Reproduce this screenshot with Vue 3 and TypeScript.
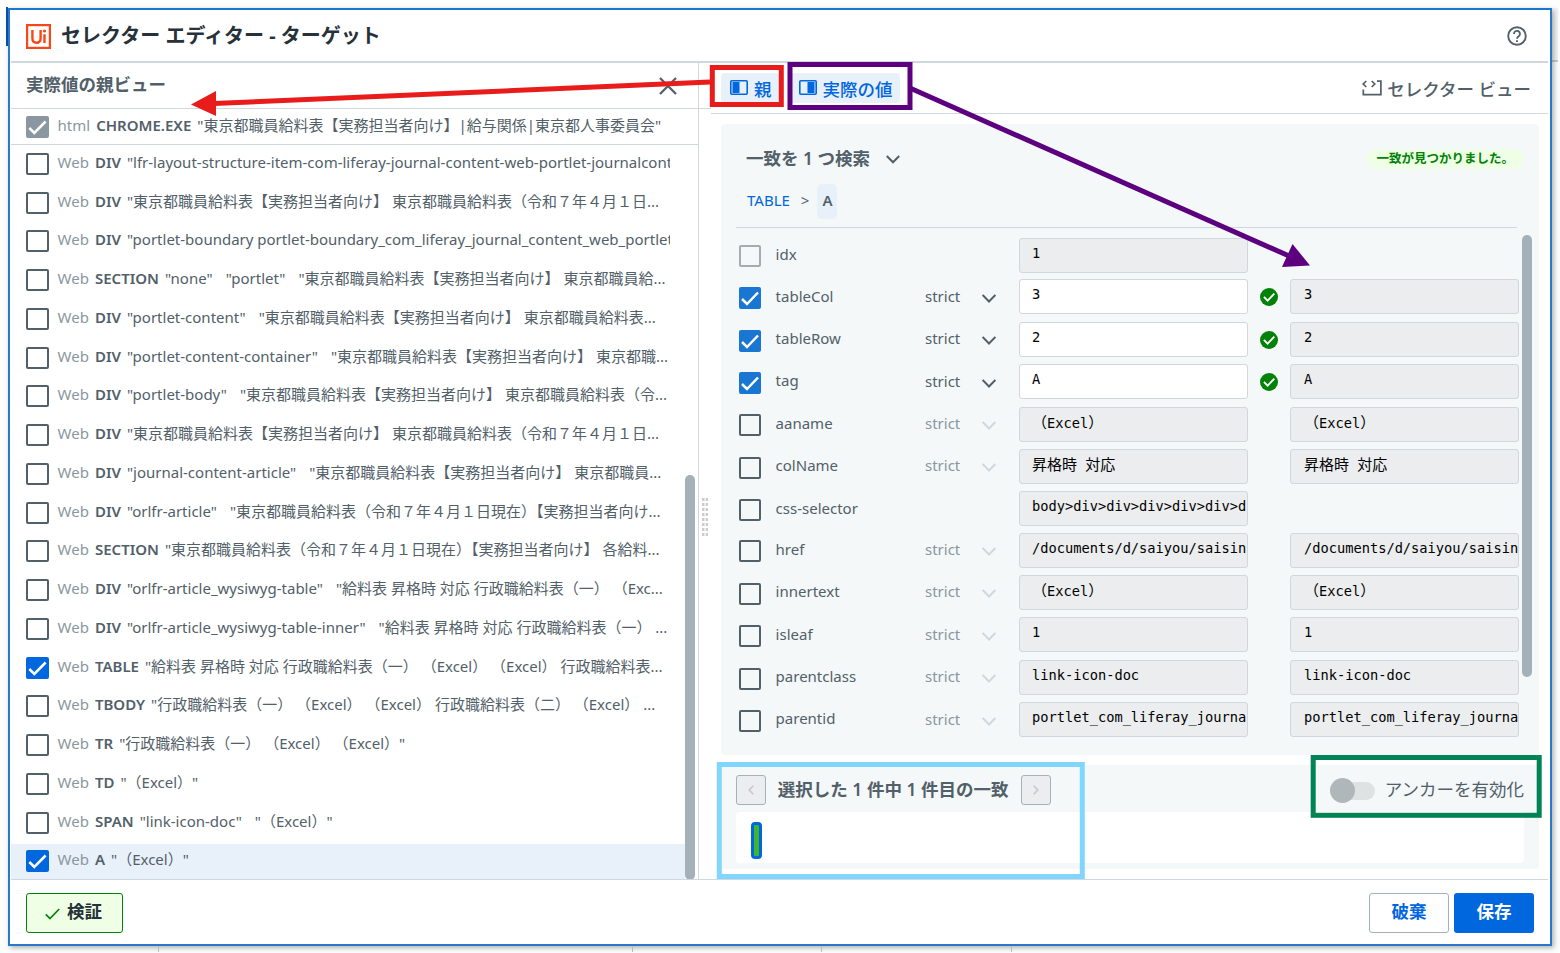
<script setup lang="ts">
interface TreeNode {
  kind: string
  tag: string
  values: string[]
  checked?: boolean
  active?: boolean
}

interface Attribute {
  name: string
  value: string
  actual?: string
  mode?: boolean
  state: 'on' | 'off' | 'locked'
}

const nodes: TreeNode[] = [
  { kind: 'Web', tag: 'DIV', values: ['"lfr-layout-structure-item-com-liferay-journal-content-web-portlet-journalcontent"'] },
  { kind: 'Web', tag: 'DIV', values: ['"東京都職員給料表【実務担当者向け】 東京都職員給料表（令和７年４月１日...'] },
  { kind: 'Web', tag: 'DIV', values: ['"portlet-boundary portlet-boundary_com_liferay_journal_content_web_portlet_"'] },
  { kind: 'Web', tag: 'SECTION', values: ['"none"', '"portlet"', '"東京都職員給料表【実務担当者向け】 東京都職員給...'] },
  { kind: 'Web', tag: 'DIV', values: ['"portlet-content"', '"東京都職員給料表【実務担当者向け】 東京都職員給料表...'] },
  { kind: 'Web', tag: 'DIV', values: ['"portlet-content-container"', '"東京都職員給料表【実務担当者向け】 東京都職...'] },
  { kind: 'Web', tag: 'DIV', values: ['"portlet-body"', '"東京都職員給料表【実務担当者向け】 東京都職員給料表（令...'] },
  { kind: 'Web', tag: 'DIV', values: ['"東京都職員給料表【実務担当者向け】 東京都職員給料表（令和７年４月１日...'] },
  { kind: 'Web', tag: 'DIV', values: ['"journal-content-article"', '"東京都職員給料表【実務担当者向け】 東京都職員...'] },
  { kind: 'Web', tag: 'DIV', values: ['"orlfr-article"', '"東京都職員給料表（令和７年４月１日現在）【実務担当者向け...'] },
  { kind: 'Web', tag: 'SECTION', values: ['"東京都職員給料表（令和７年４月１日現在）【実務担当者向け】 各給料...'] },
  { kind: 'Web', tag: 'DIV', values: ['"orlfr-article_wysiwyg-table"', '"給料表 昇格時 対応 行政職給料表（一） （Exc...'] },
  { kind: 'Web', tag: 'DIV', values: ['"orlfr-article_wysiwyg-table-inner"', '"給料表 昇格時 対応 行政職給料表（一） ...'] },
  { kind: 'Web', tag: 'TABLE', values: ['"給料表 昇格時 対応 行政職給料表（一） （Excel） （Excel） 行政職給料表...'], checked: true },
  { kind: 'Web', tag: 'TBODY', values: ['"行政職給料表（一） （Excel） （Excel） 行政職給料表（二） （Excel） ...'] },
  { kind: 'Web', tag: 'TR', values: ['"行政職給料表（一） （Excel） （Excel）"'] },
  { kind: 'Web', tag: 'TD', values: ['"（Excel）"'] },
  { kind: 'Web', tag: 'SPAN', values: ['"link-icon-doc"', '"（Excel）"'] },
  { kind: 'Web', tag: 'A', values: ['"（Excel）"'], checked: true, active: true },
]

const attributes: Attribute[] = [
  { name: 'idx', value: '1', state: 'locked' },
  { name: 'tableCol', value: '3', actual: '3', mode: true, state: 'on' },
  { name: 'tableRow', value: '2', actual: '2', mode: true, state: 'on' },
  { name: 'tag', value: 'A', actual: 'A', mode: true, state: 'on' },
  { name: 'aaname', value: '（Excel）', actual: '（Excel）', mode: true, state: 'off' },
  { name: 'colName', value: '昇格時 対応', actual: '昇格時 対応', mode: true, state: 'off' },
  { name: 'css-selector', value: 'body>div>div>div>div>div>div', state: 'off' },
  { name: 'href', value: '/documents/d/saiyou/saisinn', actual: '/documents/d/saiyou/saisinn', mode: true, state: 'off' },
  { name: 'innertext', value: '（Excel）', actual: '（Excel）', mode: true, state: 'off' },
  { name: 'isleaf', value: '1', actual: '1', mode: true, state: 'off' },
  { name: 'parentclass', value: 'link-icon-doc', actual: 'link-icon-doc', mode: true, state: 'off' },
  { name: 'parentid', value: 'portlet_com_liferay_journal', actual: 'portlet_com_liferay_journal', mode: true, state: 'off' },
]

// Splits a value into half-width and full-width runs, which are set at different sizes.
function runs(value: string): { text: string; wide: boolean }[] {
  return (value.match(/[\u0000-\u00ff]+|[^\u0000-\u00ff]+/g) ?? []).map((text) => ({
    text,
    wide: text.charCodeAt(0) > 0xff,
  }))
}
</script>

<template>
  <div class="stage">
    <i class="accent"></i>
    <i class="edge"></i>
    <i class="tick t1"></i><i class="tick t2"></i><i class="tick t3"></i><i class="tick t4"></i>

    <section class="dialog">
      <header class="titlebar">
        <svg class="logo" width="25" height="25" viewBox="0 0 25 25" fill="none" stroke="#fa4616">
          <rect x="1.1" y="1.1" width="22.8" height="22.8" stroke-width="2.2" />
          <path d="M6.4 6v8.2c0 3 1.500 4.500 4.100 4.500s4.100-1.500 4.100-4.500V6M18.500 10.200v8.900" stroke-width="2.4" />
          <circle cx="18.500" cy="7" r="1.600" fill="#fa4616" stroke="none" />
        </svg>
        <h1>セレクター エディター - ターゲット</h1>
        <svg class="help" width="20" height="20" viewBox="0 0 20 20" fill="none" stroke="#526069">
          <circle cx="10" cy="10" r="8.8" stroke-width="1.9" />
          <path d="M7 8a3 3 0 1 1 4.7 2.3C10.600 11.100 10 11.600 10 12.700" stroke-width="1.8" />
          <path d="M10 14.200v1.900" stroke-width="1.9" />
        </svg>
      </header>

      <div class="body">
        <aside class="parents">
          <div class="parents-head">
            <h2>実際値の親ビュー</h2>
            <svg width="18" height="18" viewBox="0 0 18 18" fill="none" stroke="#526069" stroke-width="2.300">
              <path d="M1 1l16 16M17 1L1 17" />
            </svg>
          </div>
          <div class="node root">
            <span class="box grey">
              <svg width="23" height="22" viewBox="0 0 23 22"><path d="M3.300 12l5 5L19.600 5.500" /></svg>
            </span>
            <span class="kind">html</span>
            <b>CHROME.EXE</b>
            <span class="val">"東京都職員給料表【実務担当者向け】|給与関係|東京都人事委員会"</span>
          </div>
          <div class="scroller">
            <div class="nodes">
              <div v-for="(n, i) in nodes" :key="i" class="node" :class="{ active: n.active }">
                <span class="box" :class="{ on: n.checked }">
                  <svg v-if="n.checked" width="23" height="22" viewBox="0 0 23 22"><path d="M3.300 12l5 5L19.600 5.500" /></svg>
                </span>
                <span class="kind">{{ n.kind }}</span>
                <b>{{ n.tag }}</b>
                <span v-for="(v, j) in n.values" :key="j" class="val">{{ v }}</span>
              </div>
            </div>
            <div class="thumb"></div>
          </div>
        </aside>

        <div class="splitter">
          <div class="cap"></div>
          <svg width="6" height="39" viewBox="0 0 6 39" fill="#ccc">
            <template v-for="k in 8" :key="k">
              <rect x="0" :y="(k - 1) * 5" width="2.500" height="3" />
              <rect x="3.700" :y="(k - 1) * 5" width="2.300" height="3" />
            </template>
          </svg>
        </div>

        <main class="detail">
          <nav class="toolbar">
            <button class="toggle">
              <svg width="18" height="15" viewBox="0 0 18 15">
                <rect x=".8" y=".8" width="16.400" height="13.400" rx="1" fill="none" stroke="#0067df" stroke-width="1.600" />
                <rect x="2.500" y="2" width="7" height="11" fill="#0067df" />
              </svg>
              <span>親</span>
            </button>
            <button class="toggle second">
              <svg width="18" height="15" viewBox="0 0 18 15">
                <rect x=".8" y=".8" width="16.400" height="13.400" rx="1" fill="none" stroke="#0067df" stroke-width="1.600" />
                <rect x="8.500" y="2" width="7" height="11" fill="#0067df" />
              </svg>
              <span>実際の値</span>
            </button>
            <div class="view">
              <svg width="20" height="16" viewBox="0 0 20 16" fill="none" stroke="#526069" stroke-width="1.700">
                <path d="M4.300 1L1.200 4l3.100 3M9.700 1l3.100 3-3.100 3M15 1.200h3.900v13.500H1.300V9.500" />
              </svg>
              <span>セレクター ビュー</span>
            </div>
          </nav>

          <section class="card attrs">
            <div class="match">
              <span class="match-title">一致を 1 つ検索</span>
              <svg width="14" height="9" viewBox="0 0 14 9" fill="none" stroke="#526069" stroke-width="2">
                <path d="M.8 1L7 7.300 13.200 1" />
              </svg>
              <span class="badge">一致が見つかりました。</span>
            </div>
            <div class="crumbs">
              <span class="link">TABLE</span>
              <span class="sep">&gt;</span>
              <span class="current">A</span>
            </div>
            <div class="table-wrap">
              <div class="table">
                <div v-for="a in attributes" :key="a.name" class="attr" :class="{ short: !a.mode }">
                  <span class="box small" :class="a.state">
                    <svg v-if="a.state === 'on'" width="22" height="22" viewBox="0 0 22 22"><path d="M3 12l5 5L19 5.500" /></svg>
                  </span>
                  <span class="name">{{ a.name }}</span>
                  <span class="mode" :class="{ dim: a.state !== 'on' }">
                    <template v-if="a.mode">
                      <span>strict</span>
                      <svg width="14" height="9" viewBox="0 0 14 9" fill="none" stroke="currentColor" stroke-width="2">
                        <path d="M.6 1L7 7.500 13.400 1" />
                      </svg>
                    </template>
                  </span>
                  <span class="field" :class="{ editable: a.state === 'on' }">
                    <span class="clip"><span v-for="(r, i) in runs(a.value)" :key="i" :class="{ wide: r.wide }">{{ r.text }}</span></span>
                  </span>
                  <span class="ok">
                    <svg v-if="a.state === 'on'" width="18" height="18" viewBox="0 0 18 18">
                      <circle cx="9" cy="9" r="9" fill="#038108" />
                      <path d="M3.900 8.900l3.700 3.700 6.700-7" fill="none" stroke="#fff" stroke-width="1.800" />
                    </svg>
                  </span>
                  <span v-if="a.actual" class="field actual">
                    <span class="clip"><span v-for="(r, i) in runs(a.actual)" :key="i" :class="{ wide: r.wide }">{{ r.text }}</span></span>
                  </span>
                </div>
              </div>
              <div class="thumb"></div>
            </div>
          </section>

          <section class="card results">
            <div class="pager">
              <button class="step">
                <svg width="6" height="10" viewBox="0 0 6 10"><path d="M5.300.8L1.200 5l4.100 4.200" /></svg>
              </button>
              <span class="pager-text">選択した 1 件中 1 件目の一致</span>
              <button class="step">
                <svg width="6" height="10" viewBox="0 0 6 10"><path d="M.7.800L4.800 5 .7 9.200" /></svg>
              </button>
              <span class="switch"><i></i></span>
              <span class="anchor">アンカーを有効化</span>
            </div>
            <div class="strip"><i></i></div>
          </section>
        </main>
      </div>

      <footer class="actions">
        <button class="verify">
          <svg width="15" height="12" viewBox="0 0 15 12" fill="none" stroke="#038108" stroke-width="1.700">
            <path d="M.8 6.300l4.200 4.200L14.200 1" />
          </svg>
          <span>検証</span>
        </button>
        <button class="discard">破棄</button>
        <button class="save">保存</button>
      </footer>
    </section>

    <svg class="callouts" width="1560" height="953" viewBox="0 0 1560 953" fill="none">
      <path d="M710 82L214 103.500" stroke="#e91c1c" stroke-width="5" />
      <path d="M191 104.500L216 91v25z" fill="#e91c1c" />
      <rect x="712.300" y="67.500" width="69" height="37" stroke="#e91c1c" stroke-width="5" />
      <path d="M911 88.500L1288 255.500" stroke="#5c0080" stroke-width="5" />
      <path d="M1310 265.500L1292.500 244 1282 267z" fill="#5c0080" />
      <rect x="790" y="64.500" width="120" height="43" stroke="#5c0080" stroke-width="5" />
      <rect x="719.300" y="764.500" width="363" height="112" stroke="#80d6ff" stroke-width="5" />
      <rect x="1313.200" y="757.500" width="226" height="57.800" stroke="#008456" stroke-width="5" />
    </svg>
  </div>
</template>

<style>
body {
  margin: 0;
  overflow: hidden;
}
</style>

<style scoped>
* {
  box-sizing: border-box;
}
.stage {
  position: relative;
  width: 1560px;
  height: 953px;
  padding: 8px 0 0 8px;
  overflow: hidden;
  background: #fcfdfd;
  color: #526069;
  font: 15px/20px 'Noto Sans', 'Noto Sans CJK JP', sans-serif;
}
.accent {
  position: absolute;
  left: 6px;
  top: 7px;
  width: 2px;
  height: 39px;
  background: #0b4fb5;
}
.edge {
  position: absolute;
  left: 1552px;
  top: 8px;
  width: 6px;
  height: 54px;
  background: #f3f3f3;
  border-bottom: 2px solid #ccc;
}
.tick {
  position: absolute;
  top: 946px;
  width: 1px;
  height: 6px;
  background: #bbb;
  z-index: 1;
}
.t1 { left: 158px; }
.t2 { left: 632px; }
.t3 { left: 821px; }
.t4 { left: 1011px; }
.dialog {
  position: relative;
  display: flex;
  flex-direction: column;
  width: 1544px;
  height: 938px;
  padding: 0 2px 0 1px;
  border: 2px solid #2a79c9;
  border-top-color: #1976d2;
  background: #fff;
  box-shadow: 2px 2px 5px rgba(0, 0, 0, 0.3);
}
h1, h2 {
  margin: 0;
}
button {
  font: inherit;
  padding: 0;
  border: 0;
  color: inherit;
}
svg {
  flex: none;
  display: block;
}
.titlebar {
  display: flex;
  flex: none;
  align-items: center;
  height: 53px;
  padding: 0 21px 0 15px;
  border-bottom: 2px solid #cfd8dd;
}
.logo {
  margin-top: 2px;
}
.titlebar h1 {
  margin-left: 10px;
  font-size: 20px;
  line-height: 28px;
  font-weight: 700;
  color: #273139;
}
.help {
  margin-left: auto;
}
.body {
  display: flex;
  height: 816px;
  flex: none;
}
.parents {
  display: flex;
  flex-direction: column;
  width: 688px;
  border-right: 1px solid #cfd8dd;
}
.parents-head {
  display: flex;
  flex: none;
  align-items: center;
  justify-content: space-between;
  height: 46px;
  padding: 0 21px 0 15px;
  border-bottom: 1px solid #cfd8dd;
}
.parents-head h2 {
  margin-bottom: 3px;
  font-size: 17.5px;
  line-height: 24px;
}
.node {
  display: flex;
  flex: none;
  align-items: center;
  height: 35px;
  padding-left: 15px;
  margin-bottom: 3.75px;
  white-space: nowrap;
  overflow: hidden;
}
.node.active {
  background: #e8f0fa;
}
.node.root {
  height: 36px;
  margin: 0;
  border-bottom: 1px solid #cfd8dd;
}
.box {
  flex: none;
  width: 23px;
  height: 22px;
  border: 2px solid #526069;
  border-radius: 2px;
}
.box svg {
  margin: -2px;
}
.box path {
  fill: none;
  stroke: #fff;
  stroke-width: 2.5;
}
.box.on {
  border-color: #0067df;
  background: #0067df;
}
.box.grey {
  border-color: #8a97a0;
  background: #8a97a0;
}
.box.small {
  width: 22px;
}
.box.small.on {
  border-color: #1976d2;
  background: #1976d2;
}
.box.locked {
  border-color: #a4abb1;
}
.kind {
  margin: -4px 6px 0 8.6px;
  color: #8a97a0;
}
.node b {
  margin: -4px 6px 0 0;
  font-weight: 600;
}
.val {
  margin: -4px 13px 0 0;
}
.scroller {
  display: flex;
  flex: 1;
  min-height: 0;
  overflow: hidden;
}
.nodes {
  width: 674px;
  padding-top: 1.3px;
}
.node:not(.root) {
  border-right: 15px solid transparent;
}
.thumb {
  flex: none;
  width: 10px;
  border-radius: 5px;
  background: #a4b1b8;
}
.scroller .thumb {
  height: 405px;
  margin-top: 330px;
}
.splitter {
  width: 12px;
}
.cap {
  height: 46px;
  border-bottom: 1px solid #cfd8dd;
}
.splitter svg {
  margin: 389px 0 0 3px;
}
.detail {
  width: 837px;
}
.toolbar {
  display: flex;
  height: 51px;
  padding: 10px 16px 0 10px;
  border-bottom: 1px solid #cfd8dd;
  font-size: 17.5px;
}
.toggle {
  display: flex;
  align-items: center;
  height: 30px;
  gap: 6px;
  padding: 0 7px 0 9px;
  border-radius: 4px;
  background: #e8f0fa;
  color: #0067df;
  font-weight: 500;
}
.toggle span, .view span {
  margin-top: 1px;
}
.toggle svg {
  margin-top: -1px;
}
.toggle.second {
  margin-left: 11px;
}
.view {
  display: flex;
  align-items: center;
  gap: 5px;
  height: 30px;
  margin-left: auto;
  margin-right: 1px;
  font-weight: 500;
}
.card {
  margin: 10px 9px 0 10px;
  border-radius: 4px;
  background: #f4f8f9;
}
.attrs {
  height: 631px;
  padding: 17px 7px 0 15px;
}
.match {
  display: flex;
  align-items: center;
  height: 36px;
  padding: 0 8px 0 10px;
  font-weight: 600;
}
.match-title {
  margin: -2px 16px 0 0;
  font-size: 17.5px;
}
.badge {
  margin-left: auto;
  height: 20px;
  padding: 0 10px;
  border-radius: 10px;
  background: #eeffe5;
  color: #038108;
  font-size: 12.5px;
  font-weight: 700;
  line-height: 20px;
}
.crumbs {
  display: flex;
  align-items: center;
  width: 781px;
  height: 51px;
  padding: 0 0 2px 11px;
  border-bottom: 1px solid #cfd8dd;
}
.link {
  margin-top: -2px;
  color: #0067df;
}
.sep {
  margin: -2px 8px 0 11px;
}
.current {
  width: 20px;
  height: 35px;
  border-radius: 5px;
  background: #e8f0fa;
  font-weight: 600;
  line-height: 32px;
  text-align: center;
}
.table-wrap {
  display: flex;
  height: 520px;
}
.table {
  width: 786px;
  padding-top: 10.3px;
}
.table-wrap .thumb {
  height: 442px;
  margin-top: 7px;
}
.attr {
  display: flex;
  height: 42.4px;
  padding-left: 3px;
}
.attr.short {
  height: 41.2px;
}
.attr .box {
  margin-top: 7.8px;
}
.attr .box.locked {
  margin-top: 7px;
}
.name {
  width: 149.4px;
  margin: 6.2px 0 0 14.6px;
}
.mode {
  display: flex;
  gap: 22px;
  width: 94px;
  margin-top: 6.4px;
}
.mode svg {
  margin-top: 8px;
}
.mode.dim span {
  color: #8a97a0;
}
.mode.dim svg {
  color: #cfd8dd;
}
.field {
  flex: none;
  width: 229px;
  height: 35px;
  padding: 4px 0 0 12px;
  border: 1px solid #cfd8dd;
  border-radius: 3px;
  background: #ebedee;
}
.field.actual {
  padding-left: 13px;
}
.field.editable {
  background: #fff;
}
.clip {
  display: block;
  overflow: hidden;
  height: 22px;
  color: #000;
  font: 13.7px/20px 'DejaVu Sans Mono', 'Noto Sans CJK JP', monospace;
  white-space: pre;
}
.wide {
  font: 15px/20px 'Noto Sans CJK JP', sans-serif;
}
.ok {
  width: 42px;
  padding: 9px 0 0 12px;
}
.results {
  height: 104px;
  padding: 10px 15px 0;
}
.pager {
  display: flex;
  align-items: center;
  height: 30px;
  font-size: 17.5px;
}
.step {
  display: flex;
  align-items: center;
  justify-content: center;
  width: 30px;
  height: 30px;
  border: 1px solid #a4b1b8;
  border-radius: 3px;
  background: #ebedee;
}
.step path {
  fill: none;
  stroke: #c3c9cd;
  stroke-width: 1.6;
}
.pager-text {
  margin: -2px 12px 0 11.8px;
  font-weight: 600;
}
.anchor {
  margin-top: -2px;
}
.switch {
  display: flex;
  align-items: center;
  width: 43px;
  height: 18px;
  margin: 1px 10px 0 auto;
  border-radius: 9px;
  background: #dfe2e3;
}
.switch i {
  width: 25px;
  height: 25px;
  margin-left: -2px;
  border-radius: 50%;
  background: #b0b7ba;
}
.strip {
  height: 51px;
  margin-top: 7px;
  padding: 10px 15px;
  border-radius: 4px;
  background: #fff;
}
.strip i {
  display: block;
  width: 11px;
  height: 37px;
  border: 3px solid #0067df;
  border-radius: 4px;
  background: #3db72f;
}
.actions {
  display: flex;
  height: 65px;
  padding: 13px 14px 0 15px;
  border-top: 1px solid #cfd8dd;
  font-size: 17.5px;
  font-weight: 700;
}
.actions button {
  height: 40px;
  width: 80px;
  border-radius: 3px;
  padding-bottom: 4px;
}
.actions .verify {
  display: flex;
  align-items: center;
  width: 97px;
  gap: 7px;
  padding-left: 18px;
  border: 1px solid #038108;
  background: #eeffe5;
  color: #273139;
}
.verify svg {
  margin-top: 5px;
}
.discard {
  margin-left: auto;
  border: 1px solid #a4b1b8;
  background: #fff;
  color: #0067df;
}
.save {
  margin-left: 5px;
  background: #0067df;
  color: #fff;
}
.callouts {
  position: absolute;
  left: 0;
  top: 0;
}
</style>
